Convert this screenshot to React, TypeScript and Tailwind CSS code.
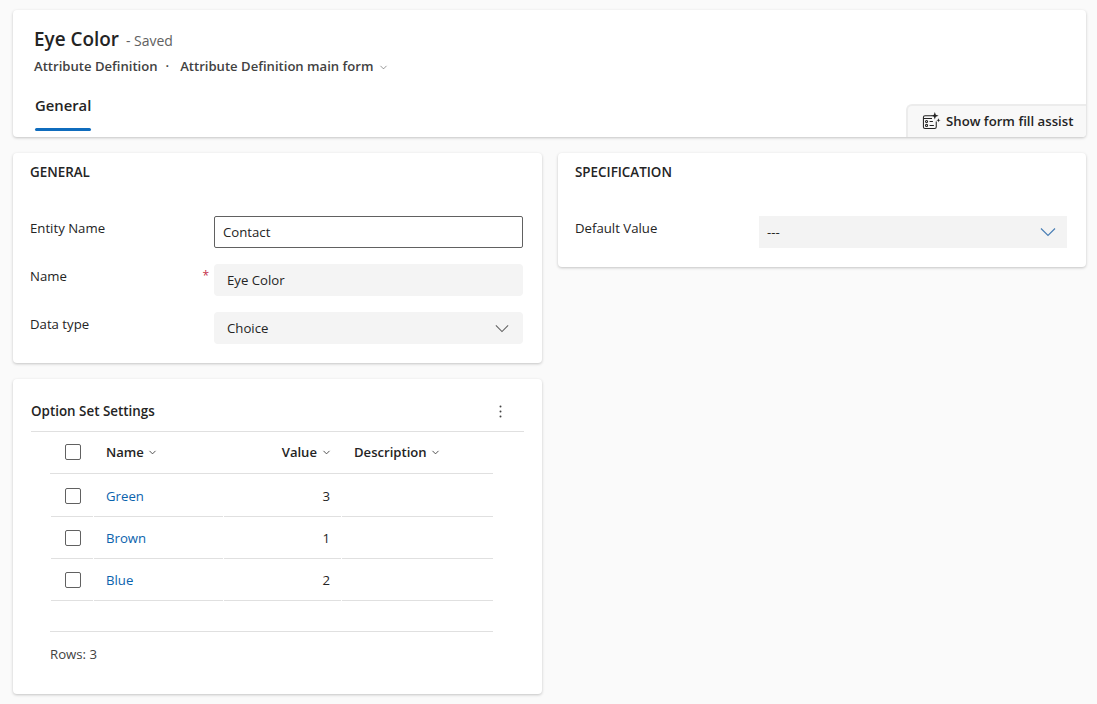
import { ChevronDown } from 'lucide-react';

const rows = [
  { name: 'Green', value: 3, height: 'h-[43px]', box: 'pt-[2px]', text: 'pt-[4px]' },
  { name: 'Brown', value: 1, height: 'h-[42px]', box: 'pt-0', text: 'pt-[2px]' },
  { name: 'Blue', value: 2, height: 'h-[42px]', box: 'pt-0', text: 'pt-[2px]' },
];

function Chevron({ className }: { className: string }) {
  return (
    <svg viewBox="0 0 16 10" fill="none" stroke="currentColor" strokeWidth="1.2" className={className}>
      <path d="M1 1.5l7 7 7-7" />
    </svg>
  );
}

function AssistIcon() {
  return (
    <svg viewBox="0 0 20 20" width="19" height="19" fill="none" stroke="#242424" strokeWidth="1.1" className="mr-[5px] mb-[3px]">
      <path d="M11 5H3.2A1.7 1.7 0 0 0 1.5 6.7v10.1c0 .9.8 1.7 1.7 1.7h10.1c.9 0 1.7-.8 1.7-1.7V11" />
      <circle cx="4.8" cy="11" r="1.1" />
      <circle cx="4.8" cy="15.2" r="1.1" />
      <path d="M8 11h3.5M8 15.2h4.5M1.5 8h9" />
      <path d="M13.5 1l1 3 3 1-3 1-1 3-1-3-3-1 3-1z" fill="#242424" stroke="none" />
      <path d="M17.3 7.5l.6 1.6 1.6.6-1.6.6-.6 1.6-.6-1.6-1.6-.6 1.6-.6z" fill="#242424" stroke="none" />
    </svg>
  );
}

function Checkbox() {
  return <div className="w-4 h-4 rounded-[2px] border border-[#616161] bg-white" />;
}

function FieldRow({ label, required, children }: { label: string; required?: boolean; children: React.ReactNode }) {
  return (
    <div className="flex">
      <div className="w-[184px] flex justify-between pt-[3px] pr-[5px] h-8 text-[#242424]">
        <span>{label}</span>
        {required && <span className="text-[#c4314b] text-[12px]">*</span>}
      </div>
      {children}
    </div>
  );
}

export default function App() {
  return (
    <div className="min-h-[704px] bg-[#fafafa] pt-[10px] pl-[13px] pr-[11px] font-['Open_Sans',sans-serif] text-[13.2px] text-[#242424] overflow-hidden">
      <div className="h-[127px] bg-white rounded shadow-[0_1px_3px_rgba(0,0,0,0.22)] flex justify-between">
        <div className="pl-[21px] pt-[15px]">
          <div className="flex items-baseline h-[30px]">
            <span className="text-[18.9px] font-semibold">Eye Color</span>
            <span className="ml-[7px] text-[#616161] text-[14px]">- Saved</span>
          </div>
          <div className="flex items-center h-[24px] font-semibold text-[#424242] text-[13.1px]">
            <span>Attribute Definition</span>
            <span className="ml-[8px] mr-[11px]">·</span>
            <span>Attribute Definition main form</span>
            <ChevronDown size={11} strokeWidth={1.2} className="ml-[5px] text-[#424242]" />
          </div>
          <div className="mt-[15px] ml-[1px] h-[23px] w-[56px] font-semibold text-[14.8px]">General</div>
          <div className="mt-[11px] ml-[1px] w-[56px] h-[3px] rounded-full bg-[#0f6cbd]" />
        </div>
        <div className="self-end h-[33px] w-[180px] flex items-center pl-[14px] bg-[#f8f8f8] border-t-2 border-l-2 border-[#ececec] rounded-tl-md rounded-br font-semibold">
          <AssistIcon />
          <span>Show form fill assist</span>
        </div>
      </div>

      <div className="mt-4 grid grid-cols-[529px_528px] gap-x-4 items-start">
        <div className="flex flex-col gap-4">
          <div className="h-[210px] bg-white rounded shadow-[0_1px_3px_rgba(0,0,0,0.22)] pl-[17px] pr-[19px] pt-[9px]">
            <div className="font-semibold h-[54px] text-[13.4px]">GENERAL</div>
            <div className="flex flex-col gap-4">
              <FieldRow label="Entity Name">
                <div className="w-[309px] h-8 pt-px border border-[#616161] rounded-[2px] flex items-center px-2">Contact</div>
              </FieldRow>
              <FieldRow label="Name" required>
                <div className="w-[309px] h-8 pt-px bg-[#f4f4f4] rounded flex items-center px-[13px]">Eye Color</div>
              </FieldRow>
              <FieldRow label="Data type">
                <div className="w-[309px] h-8 bg-[#f4f4f4] rounded flex items-center justify-between pl-[13px] pr-[14px]">
                  <span className="pt-px">Choice</span>
                  <Chevron className="w-[14px] h-[9px] text-[#616161]" />
                </div>
              </FieldRow>
            </div>
          </div>

          <div className="h-[315px] bg-white rounded shadow-[0_1px_3px_rgba(0,0,0,0.22)] pl-[18px] pr-[18px]">
            <div className="h-[53px] flex items-center justify-between border-b border-[#e0e0e0] pt-[22px] pb-[10px]">
              <span className="font-semibold text-[13.4px]">Option Set Settings</span>
              <svg width="3" height="13" viewBox="0 0 3 13" fill="#424242" className="mr-[22px] mt-[1px]">
                <circle cx="1.5" cy="1.5" r="1" />
                <circle cx="1.5" cy="6.5" r="1" />
                <circle cx="1.5" cy="11.5" r="1" />
              </svg>
            </div>
            <div className="ml-[19px] w-[443px]">
              <div className="h-[42px] pb-px grid grid-cols-[44px_130px_118px_151px] items-center border-b border-[#e0e0e0] font-semibold text-[13.1px]">
                <div className="pl-[15px]"><Checkbox /></div>
                <div className="pl-[12px] pt-[2px] flex items-center gap-[3px]">
                  Name <ChevronDown size={11} className="text-[#424242]" />
                </div>
                <div className="pr-[10px] pt-[2px] flex items-center justify-end gap-[4px]">
                  Value <ChevronDown size={11} className="text-[#424242]" />
                </div>
                <div className="pl-[12px] pt-[2px] flex items-center gap-[3px]">
                  Description <ChevronDown size={11} className="text-[#424242]" />
                </div>
              </div>
              {rows.map((r) => (
                <div key={r.name} className={`${r.height} pl-[1px] grid grid-cols-[43px_130px_118px_151px] gap-x-0`}>
                  <div className={`${r.box} flex items-center pl-[14px] border-b border-[#e0e0e0] mr-px`}><Checkbox /></div>
                  <div className={`${r.text} flex items-center pl-[12px] border-b border-[#e0e0e0] mr-px text-[#0b63ad]`}>{r.name}</div>
                  <div className={`${r.text} flex items-center justify-end pr-[11px] border-b border-[#e0e0e0] mr-px`}>{r.value}</div>
                  <div className="border-b border-[#e0e0e0]" />
                </div>
              ))}
              <div className="h-[31px] border-b border-[#e0e0e0]" />
              <div className="h-[45px] flex items-center text-[#424242]">Rows: 3</div>
            </div>
          </div>
        </div>

        <div className="h-[114px] bg-white rounded shadow-[0_1px_3px_rgba(0,0,0,0.22)] pl-[17px] pr-[19px] pt-[9px]">
          <div className="font-semibold h-[54px] text-[13.4px]">SPECIFICATION</div>
          <FieldRow label="Default Value">
            <div className="w-[308px] h-8 bg-[#f3f3f3] flex items-center justify-between pl-2 pr-[11px]">
              <span className="pt-px">---</span>
              <Chevron className="w-[16px] h-[10px] text-[#4a7fb5]" />
            </div>
          </FieldRow>
        </div>
      </div>
    </div>
  );
}
